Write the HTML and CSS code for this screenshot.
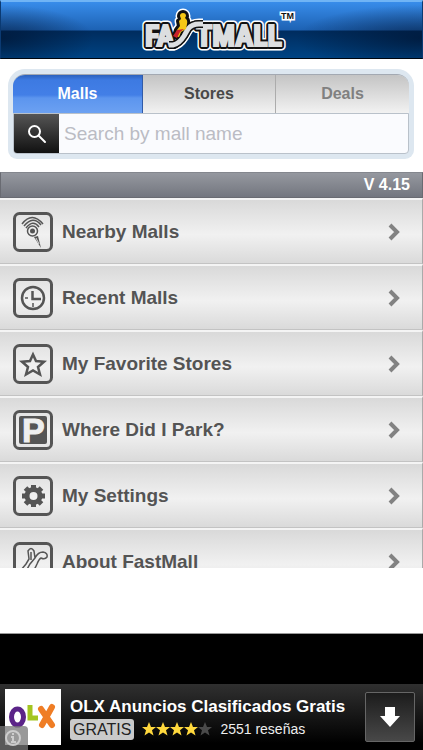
FILE: index.html
```html
<!DOCTYPE html>
<html lang="en">
<head>
<meta charset="utf-8">
<meta name="viewport" content="width=device-width, initial-scale=1">
<title>FastMall</title>
<link rel="stylesheet" href="styles.css">
</head>
<body>
<header class="header">
  <svg class="logo" viewBox="0 0 160 48" role="img" aria-label="FastMall">
    <defs>
      <g id="word">
        <text class="logo-text" x="7" y="39">FA</text>
        <text class="logo-text" x="58" y="39">TMALL</text>
      </g>
      <path id="swoosh" d="M31 38H35Q41 37 46 29L50 22Q54 17 61 17H65"/>
      <path id="figure" d="M42 9a3 3 0 0 1 6 0l-1 2q3 2 2 6l-1 5-5 3-2 5-4-1 2-6 3-4-1-5 2-2z"/>
    </defs>
    <g class="logo-white"><use href="#word"/><use href="#figure"/></g>
    <use class="swoosh-white" href="#swoosh"/>
    <g class="logo-black"><use href="#word"/><use href="#figure"/></g>
    <use class="swoosh-black" href="#swoosh"/>
    <g class="logo-silver"><use href="#word"/></g>
    <use class="swoosh-black" href="#swoosh"/>
    <use class="logo-swoosh" href="#swoosh"/>
    <use href="#figure" fill="#f6c715"/>
    <path d="M39 23l7-1-4 3-3 6-4-2z" fill="#c9202b"/>
    <text class="logo-tm" x="143" y="12">TM</text>
  </svg>
</header>

<main class="main">
  <form class="search-panel">
    <div class="tabs">
      <button class="tab tab-active" type="button">Malls</button>
      <button class="tab" type="button">Stores</button>
      <button class="tab tab-muted" type="button">Deals</button>
    </div>
    <div class="search">
      <button class="search-button" type="submit" aria-label="Search">
        <svg viewBox="0 0 20 20"><circle cx="7.500" cy="7.500" r="5.500"/><path d="M12 12l6 6"/></svg>
      </button>
      <input class="search-input" type="text" placeholder="Search by mall name" aria-label="Search by mall name">
    </div>
  </form>

  <div class="version">V 4.15</div>

  <nav class="menu">
    <a class="row" href="#">
      <svg class="icon" viewBox="0 0 40 40">
        <rect class="frame" x="1.500" y="1.500" width="37" height="37" rx="5"/>
        <g class="thin"><path d="M9 12Q19-1 30 12M11 14Q20 3 28 13M13 16Q20 7 26 15"/><circle cx="19.500" cy="19" r="5"/></g>
        <circle class="solid" cx="19.500" cy="19" r="2.500"/>
        <path class="solid" d="M21 25l4-1 3 12z"/><path class="cut" d="M23 26l3 6"/>
      </svg>
      <span class="label">Nearby Malls</span>
      <svg class="chevron" viewBox="0 0 12 18"><path d="M2 2l7 7-7 7"/></svg>
    </a>
    <a class="row" href="#">
      <svg class="icon" viewBox="0 0 40 40">
        <rect class="frame" x="1.500" y="1.500" width="37" height="37" rx="5"/>
        <circle class="line" cx="20" cy="20" r="11"/>
        <path class="line" d="M19.500 13v8H28"/>
        <path class="thin" d="M12 20h3M20 25v4"/>
      </svg>
      <span class="label">Recent Malls</span>
      <svg class="chevron" viewBox="0 0 12 18"><path d="M2 2l7 7-7 7"/></svg>
    </a>
    <a class="row" href="#">
      <svg class="icon" viewBox="0 0 40 40">
        <rect class="frame" x="1.500" y="1.500" width="37" height="37" rx="5"/>
        <path class="line" d="M20 10.500l3 6.500 8 .8-6 5.200 2 7.500-7-4-7 4 2-7.500-6-5.200 8-.8z"/>
      </svg>
      <span class="label">My Favorite Stores</span>
      <svg class="chevron" viewBox="0 0 12 18"><path d="M2 2l7 7-7 7"/></svg>
    </a>
    <a class="row" href="#">
      <svg class="icon" viewBox="0 0 40 40">
        <rect class="frame" x="1.500" y="1.500" width="37" height="37" rx="5"/>
        <rect class="solid" x="6" y="6" width="28" height="28" rx="2"/>
        <text class="parking" x="9" y="32">P</text>
      </svg>
      <span class="label">Where Did I Park?</span>
      <svg class="chevron" viewBox="0 0 12 18"><path d="M2 2l7 7-7 7"/></svg>
    </a>
    <a class="row" href="#">
      <svg class="icon" viewBox="0 0 40 40">
        <rect class="frame" x="1.500" y="1.500" width="37" height="37" rx="5"/>
        <circle class="gear" cx="20.500" cy="20" r="6.500"/>
        <path class="teeth" d="M20.500 9v4M20.500 27v4M9 20h5M27 20h5M12.500 12l3 3M25.500 25l3 3M28.500 12l-3 3M15.500 25l-3 3"/>
      </svg>
      <span class="label">My Settings</span>
      <svg class="chevron" viewBox="0 0 12 18"><path d="M2 2l7 7-7 7"/></svg>
    </a>
    <a class="row" href="#">
      <svg class="icon" viewBox="0 0 40 40">
        <rect class="frame" x="1.500" y="1.500" width="37" height="37" rx="5"/>
        <path class="thin" d="M8 28l5-6 3-5-1-8q3-5 6 0l1 7-5 6-4 7M18 10v8M22 16q3-6 8-6 5 1 4 5-2 3-6 1-2 1-4 6-3 7-6 9H9"/>
      </svg>
      <span class="label">About FastMall</span>
      <svg class="chevron" viewBox="0 0 12 18"><path d="M2 2l7 7-7 7"/></svg>
    </a>
  </nav>
</main>

<footer class="footer">
  <aside class="ad">
    <div class="ad-icon">
      <svg viewBox="0 0 56 56" role="img" aria-label="OLX">
        <ellipse cx="12.500" cy="28" rx="6" ry="8" fill="none" stroke="#5b2488" stroke-width="5"/>
        <path d="M25 16v13h8" fill="none" stroke="#a3c520" stroke-width="5"/>
        <path d="M36 20l11 16M47 18L37 36" fill="none" stroke="#ef7d25" stroke-width="6" stroke-linecap="round"/>
      </svg>
      <svg class="ad-info" viewBox="0 0 28 24" aria-hidden="true">
        <path d="M0 0h24q4 0 4 4v20H0z" fill="#777" fill-opacity=".75"/>
        <circle cx="13" cy="12" r="7" fill="none" stroke="#ccc" stroke-width="2"/>
        <path d="M13 7v2M11 11h2v5M11 16h5" fill="none" stroke="#ccc" stroke-width="2"/>
      </svg>
    </div>
    <div class="ad-body">
      <div class="ad-title">OLX Anuncios Clasificados Gratis</div>
      <div class="ad-meta">
        <span class="badge">GRATIS</span>
        <svg class="stars" viewBox="0 0 70 14" role="img" aria-label="4 of 5 stars">
          <defs><path id="star" d="M7 0l2 5h5l-4 3.300L11.500 13.500 7 10.500 2.500 13.500 4 8.300 0 5h5z"/></defs>
          <g fill="#ffd83d"><use href="#star"/><use href="#star" x="14"/><use href="#star" x="28"/><use href="#star" x="42"/></g>
          <use href="#star" x="56" fill="#4a4a4a"/>
        </svg>
        <span class="reviews">2551 reseñas</span>
      </div>
    </div>
    <button class="download" type="button" aria-label="Download">
      <svg viewBox="0 0 20 20"><path d="M5 0h10v9h5L10 20 0 9h5z" fill="#fff"/></svg>
    </button>
  </aside>
</footer>
</body>
</html>
```
FILE: styles.css
```css
* { box-sizing: border-box; }

body {
  margin: 0;
  height: 100vh;
  display: flex;
  flex-direction: column;
  overflow: hidden;
  background: #fff;
  font-family: "Liberation Sans", sans-serif;
}

button { border: 0; padding: 0; font: inherit; }

.header {
  flex: none;
  height: 59px;
  display: flex;
  justify-content: center;
  padding-top: 5px;
  border: 1px solid #0b3a72;
  border-top: 2px solid #70b4f5;
  border-bottom-color: #00060f;
  background:
    radial-gradient(ellipse 30% 60% at 100% 65%, rgba(0, 15, 40, .6), transparent),
    radial-gradient(ellipse 22% 60% at 0 65%, rgba(0, 15, 40, .6), transparent),
    linear-gradient(#388cea 0, #1d62b4 28px, #002c5e 29px, #004484 100%);
}

.logo { width: 160px; height: 48px; margin-left: 12px; overflow: visible; }
.logo-text { font: bold 30px "Liberation Sans Narrow", "Roboto Condensed", "Liberation Sans", sans-serif; }
.logo-white, .logo-black { stroke-linejoin: round; }
.logo-white { fill: #fff; stroke: #fff; stroke-width: 9px; }
.logo-black { fill: #111; stroke: #111; stroke-width: 6px; }
.logo-silver { fill: #dcdee0; stroke: #dcdee0; stroke-width: 2px; }
.swoosh-white { fill: none; stroke: #fff; stroke-width: 11px; }
.swoosh-black { fill: none; stroke: #111; stroke-width: 8px; }
.logo-swoosh { fill: none; stroke: #dcdee0; stroke-width: 5px; }
.logo-tm {
  font: bold 9px "Liberation Sans", sans-serif;
  fill: #111;
  stroke: #fff;
  stroke-width: 3px;
  paint-order: stroke;
}

.main { flex: 1; min-height: 0; display: flex; flex-direction: column; padding-bottom: 65px; }

.search-panel {
  flex: none;
  margin: 10px 9px 13px 8px;
  padding: 5px;
  border-radius: 17px 17px 9px 9px;
  background: #dde7f0;
}

.tabs {
  display: grid;
  grid-template-columns: 130px 1fr 1fr;
  height: 39px;
  overflow: hidden;
  border-radius: 12px 12px 0 0;
  border-top: 1px solid #a3a9b2;
}
.tab {
  border-right: 1px solid #acacac;
  background: linear-gradient(#c4c4c4, #f2f2f2);
  color: #494949;
  font-size: 16px;
  font-weight: bold;
}
.tab:last-child { border-right: 0; }
.tab-active {
  border-color: #315ba8;
  background: linear-gradient(#2c62bd 0, #3d7ae2 5px, #437fe7 20px, #5c95ee 23px, #6ca1f2 100%);
  color: #fff;
}
.tab-muted { color: #808080; }

.search {
  display: flex;
  height: 41px;
  border: 1px solid #b9c1ca;
  border-radius: 0 0 4px 4px;
  background: #fafbfe;
  overflow: hidden;
}
.search-button {
  width: 45px;
  display: grid;
  place-items: center;
  background: linear-gradient(#555, #111);
}
.search-button svg { width: 20px; height: 20px; fill: none; stroke: #fff; stroke-width: 2px; stroke-linecap: round; }
.search-input {
  flex: 1;
  min-width: 0;
  border: 0;
  padding: 0 5px;
  background: none;
  outline: 0;
  font: 19px "Liberation Sans", sans-serif;
}
.search-input::placeholder { color: #bbbcc4; }

.version {
  flex: none;
  height: 26px;
  padding: 0 12px;
  border: 1px solid #696b72;
  border-top-color: #84878e;
  background: linear-gradient(#95989f, #73767f);
  color: #fff;
  font-size: 16px;
  font-weight: bold;
  line-height: 24px;
  text-align: right;
}

.menu { flex: 1; min-height: 0; overflow: hidden; }
.row {
  display: flex;
  align-items: center;
  height: 66px;
  padding: 0 22px 0 13px;
  border-top: 2px solid #f4f4f4;
  border-bottom: 1px solid #c3c3c3;
  border-right: 1px solid #aaa;
  background: linear-gradient(#d9d9d9, #f1f1f1 55%, #dadada);
  color: #545454;
  text-decoration: none;
}
.icon { flex: none; width: 40px; height: 40px; }
.label { flex: 1; margin-left: 9px; font-size: 19px; font-weight: bold; line-height: 24px; }
.chevron { width: 12px; height: 18px; fill: none; stroke: #828282; stroke-width: 4px; }

.frame { fill: none; stroke: #555; stroke-width: 3px; }
.line { fill: none; stroke: #555; stroke-width: 2.5px; }
.thin { fill: none; stroke: #555; stroke-width: 1.5px; }
.solid { fill: #555; }
.cut { stroke: #ddd; stroke-width: 1px; }
.gear { fill: none; stroke: #555; stroke-width: 5px; }
.teeth { stroke: #555; stroke-width: 5px; }
.parking { fill: #eee; stroke: #eee; stroke-width: 1px; font: bold 34px "Liberation Sans", sans-serif; }

.footer {
  flex: none;
  padding-top: 50px;
  border-top: 1px solid #999;
  background: #000;
}
.ad {
  display: flex;
  align-items: center;
  height: 66px;
  padding: 0 8px 0 5px;
  background: linear-gradient(#303030, #000 90%);
  color: #fff;
}
.ad-icon { position: relative; flex: none; width: 56px; height: 56px; background: #fff; }
.ad-icon svg { display: block; }
.ad-icon .ad-info { position: absolute; left: -5px; bottom: -5px; width: 28px; height: 24px; }
.ad-body { flex: 1; min-width: 0; margin-left: 9px; }
.ad-title { font-size: 17px; font-weight: bold; line-height: 24px; white-space: nowrap; }
.ad-meta { display: flex; align-items: center; gap: 8px; }
.badge {
  height: 21px;
  padding: 0 3px;
  border-radius: 3px;
  background: #cacaca;
  color: #222;
  font-size: 16px;
  line-height: 21px;
}
.stars { width: 70px; height: 14px; }
.reviews { font-size: 14px; line-height: 20px; color: #eee; }
.download {
  flex: none;
  width: 50px;
  height: 50px;
  display: grid;
  place-items: center;
  border: 1px solid #666;
  border-radius: 2px;
  background: linear-gradient(#1c1c1c, #484848);
}
.download svg { width: 20px; height: 20px; }
```
